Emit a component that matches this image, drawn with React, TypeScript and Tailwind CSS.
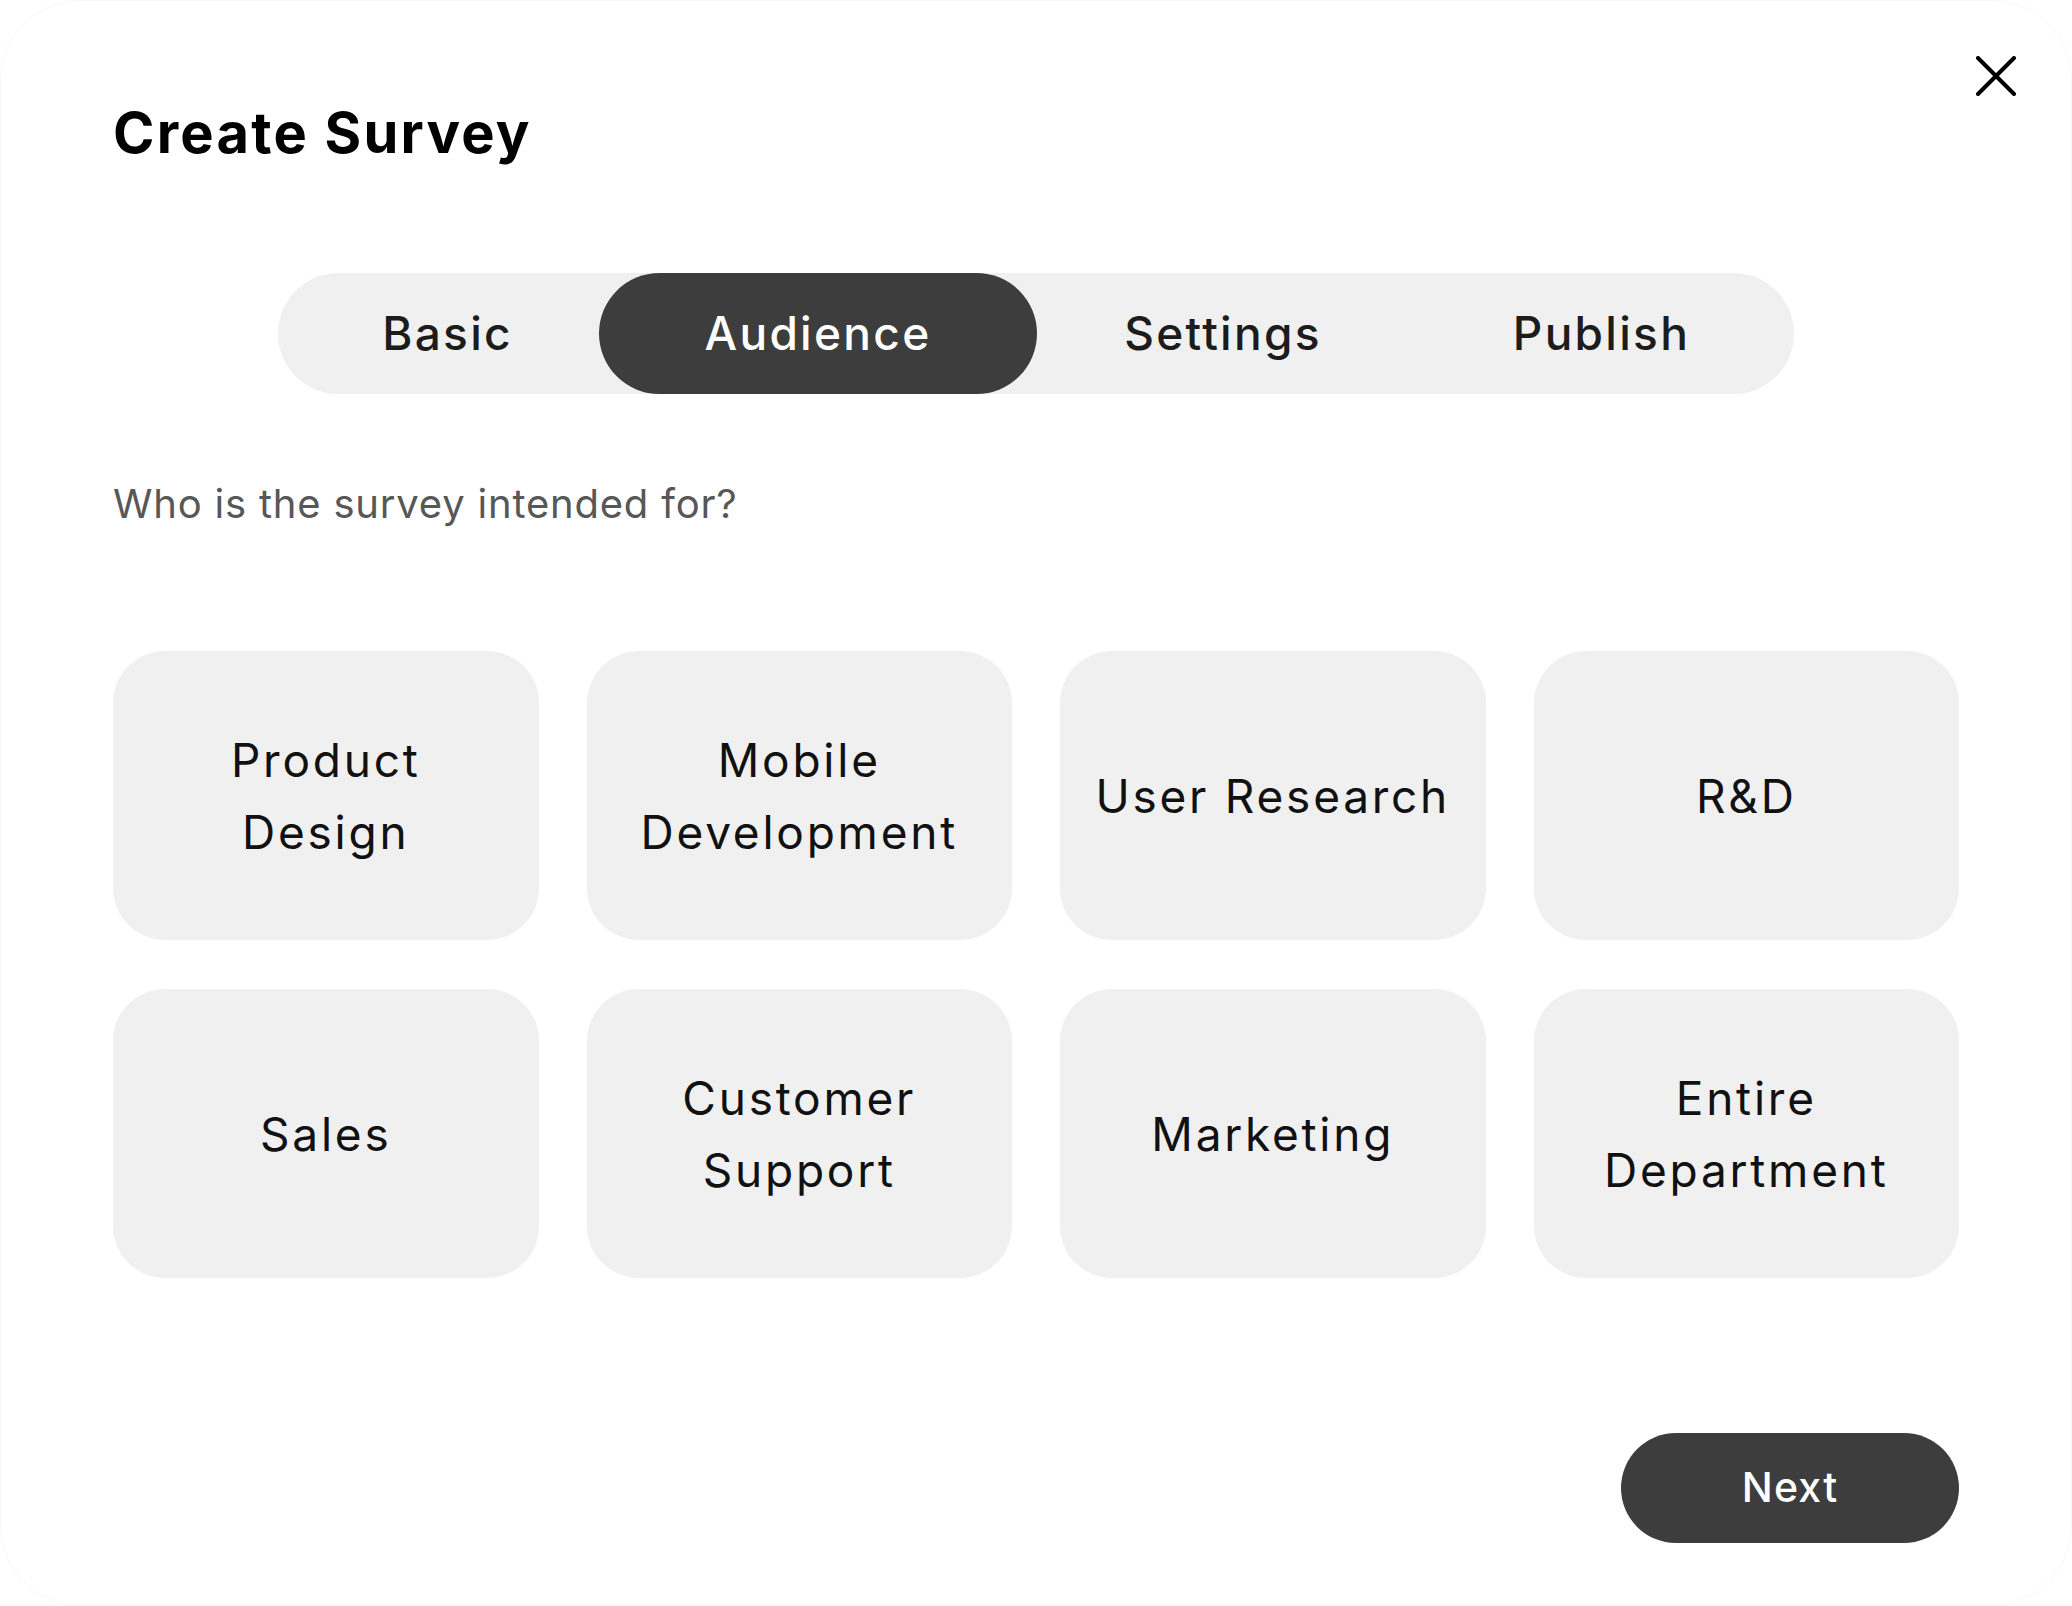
import React from 'react';

const TABS = [
  { label: 'Basic', width: 'w-[321px] pl-[18px]' },
  { label: 'Audience', width: 'w-[438px]', active: true },
  { label: 'Settings', width: 'w-[372px]' },
  { label: 'Publish', width: 'w-[385px]' },
];

const AUDIENCES: string[][] = [
  ['Product', 'Design'],
  ['Mobile', 'Development'],
  ['User Research'],
  ['R&D'],
  ['Sales'],
  ['Customer', 'Support'],
  ['Marketing'],
  ['Entire', 'Department'],
];

const App: React.FC = () => {
  return (
    <div className="w-[2072px] h-[1606px] bg-white font-['Inter','Liberation_Sans',sans-serif]">
      <div className="relative w-full h-full rounded-[80px] border border-[#f7f7f7] bg-white px-[112px] flex flex-col">
        {/* Close */}
        <button className="absolute top-[55px] right-[55px] w-[40px] h-[40px]" aria-label="Close">
          <svg width="40" height="40" viewBox="0 0 40 40" fill="none">
            <path d="M2 2L38 38M38 2L2 38" stroke="#000" strokeWidth="4" strokeLinecap="round" />
          </svg>
        </button>

        <h1 className="mt-[98px] text-[56px] leading-[68px] font-bold text-black tracking-[0.04em]">Create Survey</h1>

        {/* Step tabs */}
        <div className="mt-[106px] self-center flex h-[121px] w-[1516px] rounded-full bg-[#f0f0f0]">
          {TABS.map((tab) => (
            <div
              key={tab.label}
              className={`${tab.width} h-full flex items-center justify-center rounded-full text-[46px] font-medium tracking-[0.05em] ${
                tab.active ? 'bg-[#3d3d3d] text-white' : 'text-[#1c1c1c]'
              }`}
            >
              {tab.label}
            </div>
          ))}
        </div>

        <p className="mt-[86px] text-[40px] leading-[48px] text-[#575757] tracking-[0.02em]">Who is the survey intended for?</p>

        {/* Audience options */}
        <div className="mt-[123px] grid grid-cols-4 gap-x-[48px] gap-y-[49px]">
          {AUDIENCES.map((lines) => (
            <div
              key={lines.join(' ')}
              className="h-[289px] rounded-[52px] bg-[#f0f0f0] flex flex-col items-center justify-center text-center text-[46px] leading-[72px] text-[#111] tracking-[0.06em]"
            >
              {lines.map((l) => (
                <span key={l}>{l}</span>
              ))}
            </div>
          ))}
        </div>

        <div className="mt-[155px] flex justify-end">
          <button className="w-[338px] h-[110px] rounded-full bg-[#3d3d3d] text-white text-[41px] font-medium tracking-[0.03em]">
            Next
          </button>
        </div>
      </div>
    </div>
  );
};

export default App;
